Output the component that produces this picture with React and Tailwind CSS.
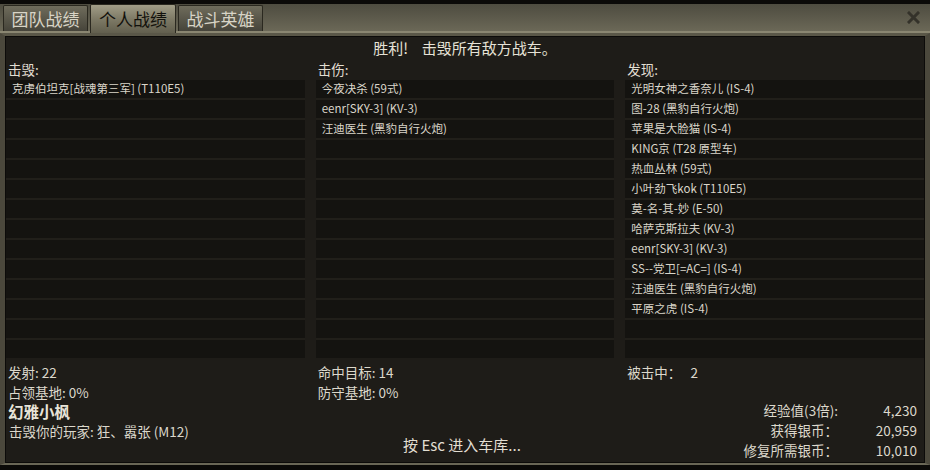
import React from "react";

const kills = ["克虏伯坦克[战魂第三军] (T110E5)"];
const damaged = ["今夜决杀 (59式)", "eenr[SKY-3] (KV-3)", "汪迪医生 (黑豹自行火炮)"];
const spotted = [
  "光明女神之香奈儿 (IS-4)",
  "图-28 (黑豹自行火炮)",
  "苹果是大脸猫 (IS-4)",
  "KING京 (T28 原型车)",
  "热血丛林 (59式)",
  "小叶劲飞kok (T110E5)",
  "莫-名-其-妙 (E-50)",
  "哈萨克斯拉夫 (KV-3)",
  "eenr[SKY-3] (KV-3)",
  "SS--党卫[=AC=] (IS-4)",
  "汪迪医生 (黑豹自行火炮)",
  "平原之虎 (IS-4)",
];

const ROWS = 14;

// one column of the result lists: label + 14 striped rows
const ListColumn = ({ label, items }) => {
  const rows = Array.from({ length: ROWS }, (_, i) => items[i] || "");
  return (
    <div className="flex flex-col">
      <div className="h-[21px] flex items-center pl-[2px] text-[13.5px] text-[#e2ded2]">
        {label}
      </div>
      <div className="flex flex-col">
        {rows.map((name, i) => (
          <div
            key={i}
            className={
              i < ROWS - 1
                ? "h-[20px] bg-[#141310] border-b-2 border-[#211f1a] flex items-center pl-[6px] text-[11.5px] text-[#dad6ca] leading-none"
                : "h-[18px] bg-[#141310] flex items-center pl-[6px] text-[11.5px] text-[#dad6ca] leading-none"
            }
          >
            {name}
          </div>
        ))}
      </div>
    </div>
  );
};

const Tab = ({ label, active }) => (
  <div
    className={
      active
        ? "w-[86px] h-[29px] -mb-[2px] mr-[2px] flex items-center justify-center rounded-t-[2px] border border-b-0 border-[#2a281f] bg-gradient-to-b from-[#a19d87] via-[#7e7a66] to-[#625f4e] text-[17px] text-[#12110c]"
        : "w-[85px] h-[26px] mr-[2px] flex items-center justify-center rounded-t-[2px] border border-b-0 border-[#2a281f] bg-gradient-to-b from-[#6f6c5c] to-[#46443a] text-[17px] text-[#d8d4c6]"
    }
  >
    {label}
  </div>
);

export default function App() {
  return (
    <div
      className="w-[930px] h-[470px] bg-[#0b0a08] flex flex-col overflow-hidden"
      style={{ fontFamily: '"Noto Sans CJK SC", "Noto Sans", sans-serif' }}
    >
      {/* tab bar */}
      <div className="h-[4px] bg-[#0b0a08]" />
      <div className="h-[27px] flex items-end pl-[3px] bg-gradient-to-b from-[#4e4c40] to-[#6b6857] relative">
        <Tab label="团队战绩" />
        <Tab label="个人战绩" active />
        <Tab label="战斗英雄" />
        <div className="flex-1" />
        <div className="h-full flex items-center pr-[10px]">
          <svg width="13" height="13" viewBox="0 0 13 13">
            <path d="M2 2 L11 11 M11 2 L2 11" stroke="#34322a" strokeWidth="3" strokeLinecap="square" />
          </svg>
        </div>
      </div>
      <div className="h-[2px] bg-[#8a8671]" />

      {/* framed panel */}
      <div className="flex-1 mb-[5px] border-x-[5px] border-b-[2px] border-t-[3px] border-x-[#4b483c] border-t-[#5a5748] border-b-[#6a6756] flex">
        <div className="flex-1 border border-[#0c0b09] bg-[#1e1c18] flex flex-col">
          <div className="h-[22px] flex items-end justify-center text-[15px] text-[#e6e2d6] leading-none pb-[4px]">
            胜利!&nbsp;&nbsp;&nbsp;&nbsp;击毁所有敌方战车。
          </div>

          <div className="grid grid-cols-3 gap-x-[11px]">
            <ListColumn label="击毁:" items={kills} />
            <ListColumn label="击伤:" items={damaged} />
            <ListColumn label="发现:" items={spotted} />
          </div>

          {/* stats */}
          <div className="flex-1 grid grid-cols-3 gap-x-[11px] text-[13.5px] text-[#dcd8cc] pt-[4px]">
            <div className="flex flex-col pl-[2px]">
              <div className="h-[20px] flex items-center">发射: 22</div>
              <div className="h-[20px] flex items-center">占领基地: 0%</div>
              <div className="h-[19px] flex items-center text-[15.5px] font-bold text-[#e8e4d8]">幻雅小枫</div>
              <div className="h-[21px] flex items-center pl-[1px]">击毁你的玩家: 狂、嚣张 (M12)</div>
            </div>
            <div className="flex flex-col pl-[2px]">
              <div className="h-[20px] flex items-center">命中目标: 14</div>
              <div className="h-[20px] flex items-center">防守基地: 0%</div>
              <div className="flex-1 flex items-end justify-center pb-[6px] -ml-[8px]">
                <span className="text-[15px] text-[#e2ded2]">按 Esc 进入车库...</span>
              </div>
            </div>
            <div className="flex flex-col pl-[2px] pr-[7px]">
              <div className="h-[20px] flex items-center">被击中：&nbsp;&nbsp;&nbsp;2</div>
              <div className="h-[18px]" />
              <div className="flex flex-col items-end">
                {[
                  ["经验值(3倍):", "4,230"],
                  ["获得银币：", "20,959"],
                  ["修复所需银币：", "10,010"],
                ].map(([k, v]) => (
                  <div key={k} className="h-[20px] flex items-center">
                    <span className="text-right">{k}</span>
                    <span className="w-[79px] text-right">{v}</span>
                  </div>
                ))}
              </div>
            </div>
          </div>
        </div>
      </div>
    </div>
  );
}
